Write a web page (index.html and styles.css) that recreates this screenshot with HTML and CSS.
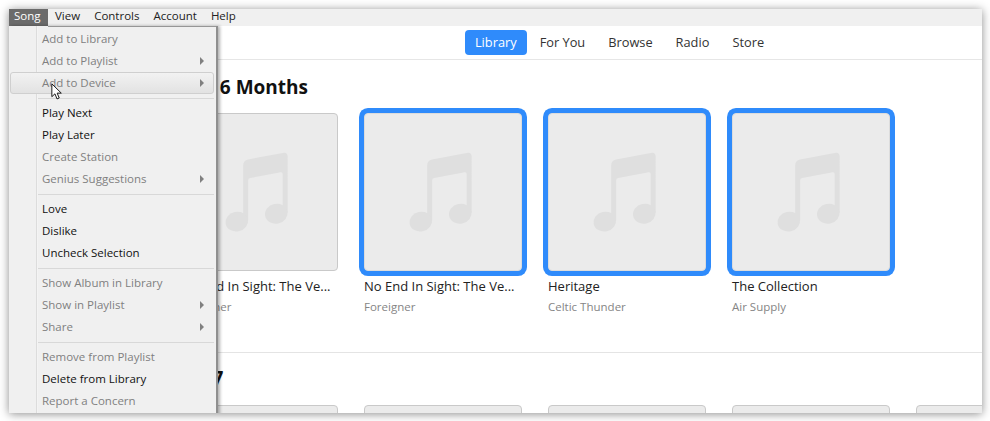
FILE: index.html
```html
<!DOCTYPE html>
<html lang="en">
<head>
    <meta charset="UTF-8">
    <title>iTunes</title>
    <link rel="stylesheet" href="styles.css">
</head>
<body>
    <svg class="defs" width="0" height="0">
        <symbol id="note" viewBox="0 0 158 158">
            <path d="M63 52Q63 47 68 46L103 39.5Q108 38.5 108 43V100H103V61Q103 58.7 101 59L70 64.8Q68 65.2 68 67V108H63Z"/>
            <ellipse cx="56.5" cy="109" rx="11.5" ry="10" transform="rotate(-12 56.5 109)"/>
            <ellipse cx="96.5" cy="101" rx="11.5" ry="10" transform="rotate(-12 96.5 101)"/>
        </symbol>
    </svg>

    <div class="window">
        <div class="menubar">
            <span class="menubar-item active">Song</span>
            <span class="menubar-item">View</span>
            <span class="menubar-item">Controls</span>
            <span class="menubar-item">Account</span>
            <span class="menubar-item">Help</span>
        </div>

        <nav class="tabs">
            <a class="tab current">Library</a>
            <a class="tab">For You</a>
            <a class="tab">Browse</a>
            <a class="tab">Radio</a>
            <a class="tab">Store</a>
        </nav>

        <section class="shelf first">
            <h2>Last 6 Months</h2>
            <div class="albums">
                <div class="album">
                    <div class="cover"><svg><use href="#note"/></svg></div>
                    <div class="name">No End In Sight: The Ve...</div>
                    <div class="artist">Foreigner</div>
                </div>
                <div class="album selected">
                    <div class="cover"><svg><use href="#note"/></svg></div>
                    <div class="name">No End In Sight: The Ve...</div>
                    <div class="artist">Foreigner</div>
                </div>
                <div class="album selected">
                    <div class="cover"><svg><use href="#note"/></svg></div>
                    <div class="name">Heritage</div>
                    <div class="artist">Celtic Thunder</div>
                </div>
                <div class="album selected">
                    <div class="cover"><svg><use href="#note"/></svg></div>
                    <div class="name">The Collection</div>
                    <div class="artist">Air Supply</div>
                </div>
            </div>
        </section>

        <section class="shelf">
            <h2>2017</h2>
            <div class="albums">
                <div class="album"><div class="cover"></div></div>
                <div class="album"><div class="cover"></div></div>
                <div class="album"><div class="cover"></div></div>
                <div class="album"><div class="cover"></div></div>
                <div class="album"><div class="cover"></div></div>
            </div>
        </section>

        <div class="menu">
            <div class="menu-group">
                <div class="menu-item off">Add to Library</div>
                <div class="menu-item off more">Add to Playlist</div>
                <div class="menu-item off more hover">Add to Device</div>
            </div>
            <div class="menu-group">
                <div class="menu-item">Play Next</div>
                <div class="menu-item">Play Later</div>
                <div class="menu-item off">Create Station</div>
                <div class="menu-item off more">Genius Suggestions</div>
            </div>
            <div class="menu-group">
                <div class="menu-item">Love</div>
                <div class="menu-item">Dislike</div>
                <div class="menu-item">Uncheck Selection</div>
            </div>
            <div class="menu-group">
                <div class="menu-item off">Show Album in Library</div>
                <div class="menu-item off more">Show in Playlist</div>
                <div class="menu-item off more">Share</div>
            </div>
            <div class="menu-group">
                <div class="menu-item off">Remove from Playlist</div>
                <div class="menu-item">Delete from Library</div>
                <div class="menu-item off">Report a Concern</div>
            </div>
        </div>

        <svg class="cursor" width="12" height="18" viewBox="0 0 14 21">
            <path d="M1 1V16L4.6 12.6L7 18.6L9.6 17.5L7.2 11.8H12Z" fill="#fff" stroke="#111" stroke-width="1.1"/>
        </svg>
    </div>
</body>
</html>
```
FILE: styles.css
```css
* {
    box-sizing: border-box;
}
html, body {
    height: 100%;
}
body {
    margin: 0;
    padding: 9px 8px 8px 9px;
    background-color: #fff;
    font-family: "Open Sans", "Noto Sans", sans-serif;
    color: #1c1c1c;
    overflow: hidden;
}
.defs {
    position: absolute;
}
.window {
    position: relative;
    height: 100%;
    background-color: #fff;
    overflow: hidden;
    box-shadow: 0 1px 9px rgba(0, 0, 0, 0.45);
}
.menubar {
    display: flex;
    height: 17px;
    background-color: #f0f0f0;
    font-size: 11.5px;
    line-height: 14px;
}
.menubar-item {
    padding: 0 7px;
    color: #222;
}
.menubar-item.active {
    width: 39px;
    padding: 0 5px;
    background-color: #6b6b6b;
    color: #fff;
}
.tabs {
    display: flex;
    justify-content: center;
    align-items: center;
    gap: 3px;
    height: 34px;
    padding-left: 248px;
    border-bottom: 1px solid #e6e6e6;
}
.tab {
    padding: 0 10px 1px;
    font-size: 12.8px;
    line-height: 24px;
    color: #333;
    border-radius: 4px;
}
.tab.current {
    background-color: #2f8bfb;
    color: #fff;
}
.shelf {
    padding: 0 0 0 171px;
}
.shelf.first {
    height: 293px;
    border-bottom: 1px solid #e4e4e4;
    padding-top: 13px;
}
.shelf h2 {
    margin: 0;
    font-size: 19px;
    line-height: 28px;
    color: #111;
}
.shelf.first h2 {
    margin: 0 0 12px -5px;
}
.shelf:not(.first) {
    padding-top: 11px;
}
.shelf:not(.first) h2 {
    margin-bottom: 13px;
}
.albums {
    display: flex;
    gap: 26px;
}
.album {
    flex: none;
    width: 158px;
}
.cover {
    height: 158px;
    background-color: #ebebeb;
    border: 1px solid #c9c9c9;
    border-radius: 4px;
}
.cover svg {
    display: block;
    width: 156px;
    height: 156px;
    fill: #dfdfdf;
}
.album.selected .cover {
    border-color: #dcdcdc;
    box-shadow: 0 0 0 5px #2f8bfb;
}
.name {
    margin-top: 5px;
    font-size: 13px;
    line-height: 20px;
    color: #222;
    white-space: nowrap;
}
.artist {
    margin-top: 1px;
    font-size: 11.5px;
    line-height: 20px;
    color: #858585;
}
.menu {
    position: absolute;
    top: 17px;
    left: 0;
    width: 209px;
    height: 400px;
    padding-top: 2px;
    background: linear-gradient(to right, #f0f0f0 27px, #dcdcdc 27px, #dcdcdc 28px, #f7f7f7 28px, #f0f0f0 29px);
    border-right: 2px solid #8f8f8f;
    box-shadow: 2px 0 3px rgba(0, 0, 0, 0.3);
}
/* top edge stops under the open Song item */
.menu::before {
    content: "";
    position: absolute;
    top: 0;
    left: 39px;
    right: 0;
    height: 1px;
    background-color: #979797;
}
.menu-group {
    position: relative;
    padding-bottom: 8px;
}
.menu-group::after {
    content: "";
    position: absolute;
    left: 29px;
    right: 2px;
    bottom: 3px;
    height: 1px;
    background-color: #d8d8d8;
}
.menu-item {
    position: relative;
    height: 22px;
    padding-left: 33px;
    font-size: 11.5px;
    line-height: 22px;
    color: #111;
}
.menu-item.off {
    color: #808080;
}
.menu-item.more::after {
    content: "";
    position: absolute;
    top: 7px;
    right: 12px;
    border-left: 4px solid #808080;
    border-top: 4px solid transparent;
    border-bottom: 4px solid transparent;
}
.menu-item.hover {
    margin: 0 2px 0 1px;
    padding-left: 31px;
    background: linear-gradient(#f2f2f2, #e2e2e2);
    border: 1px solid #cfcfcf;
    border-radius: 3px;
    line-height: 20px;
}
.menu-item.hover::after {
    top: 6px;
    right: 9px;
}
.cursor {
    position: absolute;
    top: 74px;
    left: 42px;
}
```
